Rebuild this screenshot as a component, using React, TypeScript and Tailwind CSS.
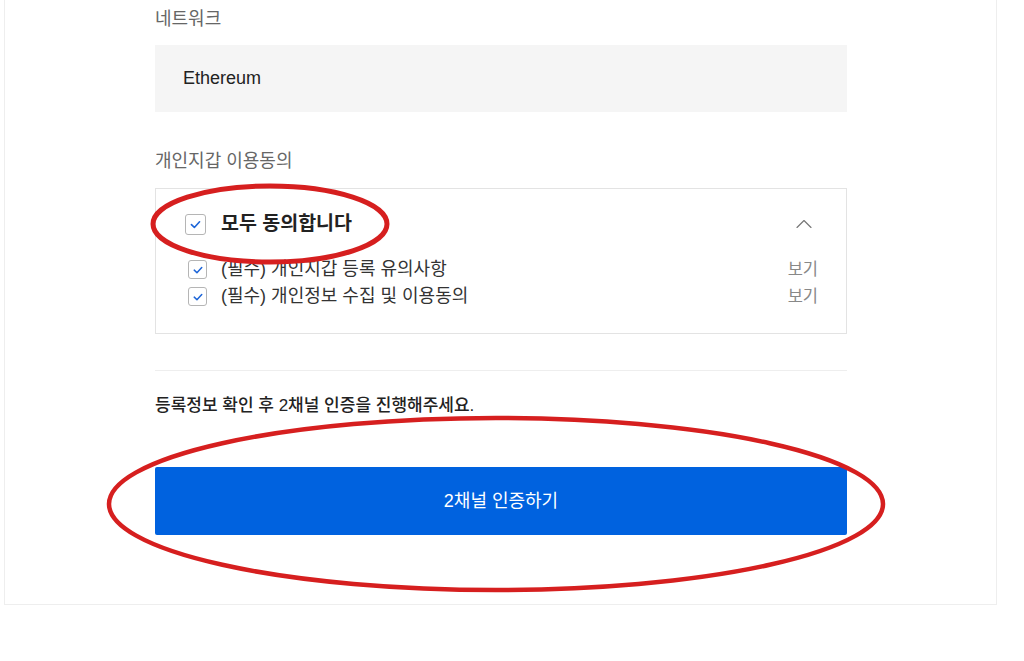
import { ChevronUp } from 'lucide-react'

const font = { fontFamily: '"Liberation Sans", "Noto Sans CJK KR", sans-serif' }

function CheckBox({ big = false }: { big?: boolean }) {
  return (
    <span
      className={`flex shrink-0 items-center justify-center rounded-[3px] border border-[#b5b5b5] bg-white ${
        big ? 'h-[21px] w-[21px]' : 'h-[19px] w-[19px]'
      }`}
    >
      <svg viewBox="0 0 16 16" className={big ? 'h-[13px] w-[13px]' : 'h-[12px] w-[12px]'}>
        <path d="M3 8.2 L6.6 11.6 L13 4.6" fill="none" stroke="#1e66d8" strokeWidth="2" strokeLinecap="round" strokeLinejoin="round" />
      </svg>
    </span>
  )
}

const terms = ['(필수) 개인지갑 등록 유의사항', '(필수) 개인정보 수집 및 이용동의']

export default function App() {
  return (
    <div className="relative h-[661px] w-[1024px] overflow-hidden bg-white" style={font}>
      <div className="ml-[4px] w-[993px] border-x border-b border-[#eeeeee] bg-white pl-[150px] pb-[69px]">
        <div className="w-[692px]">
          <div className="pt-[7px] text-[18px] leading-[25px] text-[#666]">네트워크</div>
          <div className="mt-[13px] flex h-[67px] items-center bg-[#f5f5f5] px-[28px] text-[18px] text-[#222]">
            Ethereum
          </div>

          <div className="mt-[37px] text-[18px] leading-[25px] text-[#666]">개인지갑 이용동의</div>
          <div className="mt-[14px] border border-[#e3e3e3] pl-[29px] pr-[28px] pt-[23px] pb-[23px]">
            <div className="flex h-[24px] items-center justify-between">
              <div className="flex items-center gap-[15px]">
                <CheckBox big />
                <span className="text-[19.5px] font-bold text-[#222]">모두 동의합니다</span>
              </div>
              <ChevronUp className="h-[28px] w-[28px] text-[#777]" strokeWidth={1} />
            </div>
            <div className="mt-[20px] flex flex-col">
              {terms.map((t) => (
                <div key={t} className="flex h-[27px] items-center justify-between">
                  <div className="flex items-center gap-[14px] pl-[3px]">
                    <CheckBox />
                    <span className="text-[18px] text-[#333]">{t}</span>
                  </div>
                  <span className="text-[16.5px] text-[#888]">보기</span>
                </div>
              ))}
            </div>
          </div>

          <div className="mt-[36px] h-px bg-[#eeeeee]" />
          <div className="mt-[23px] text-[17px] font-medium leading-[24px] text-[#222]">
            등록정보 확인 후 2채널 인증을 진행해주세요.
          </div>
          <button className="mt-[49px] flex h-[68px] w-full items-center justify-center rounded-[2px] bg-[#0062df] text-[18px] text-white">
            2채널 인증하기
          </button>
        </div>
      </div>

      <svg className="pointer-events-none absolute left-0 top-0" width="1024" height="661">
        <ellipse cx="270" cy="224" rx="117" ry="38" fill="none" stroke="#d61f1f" strokeWidth="5" />
        <ellipse cx="496" cy="504" rx="387" ry="86" fill="none" stroke="#d61f1f" strokeWidth="4.5" />
      </svg>
    </div>
  )
}
